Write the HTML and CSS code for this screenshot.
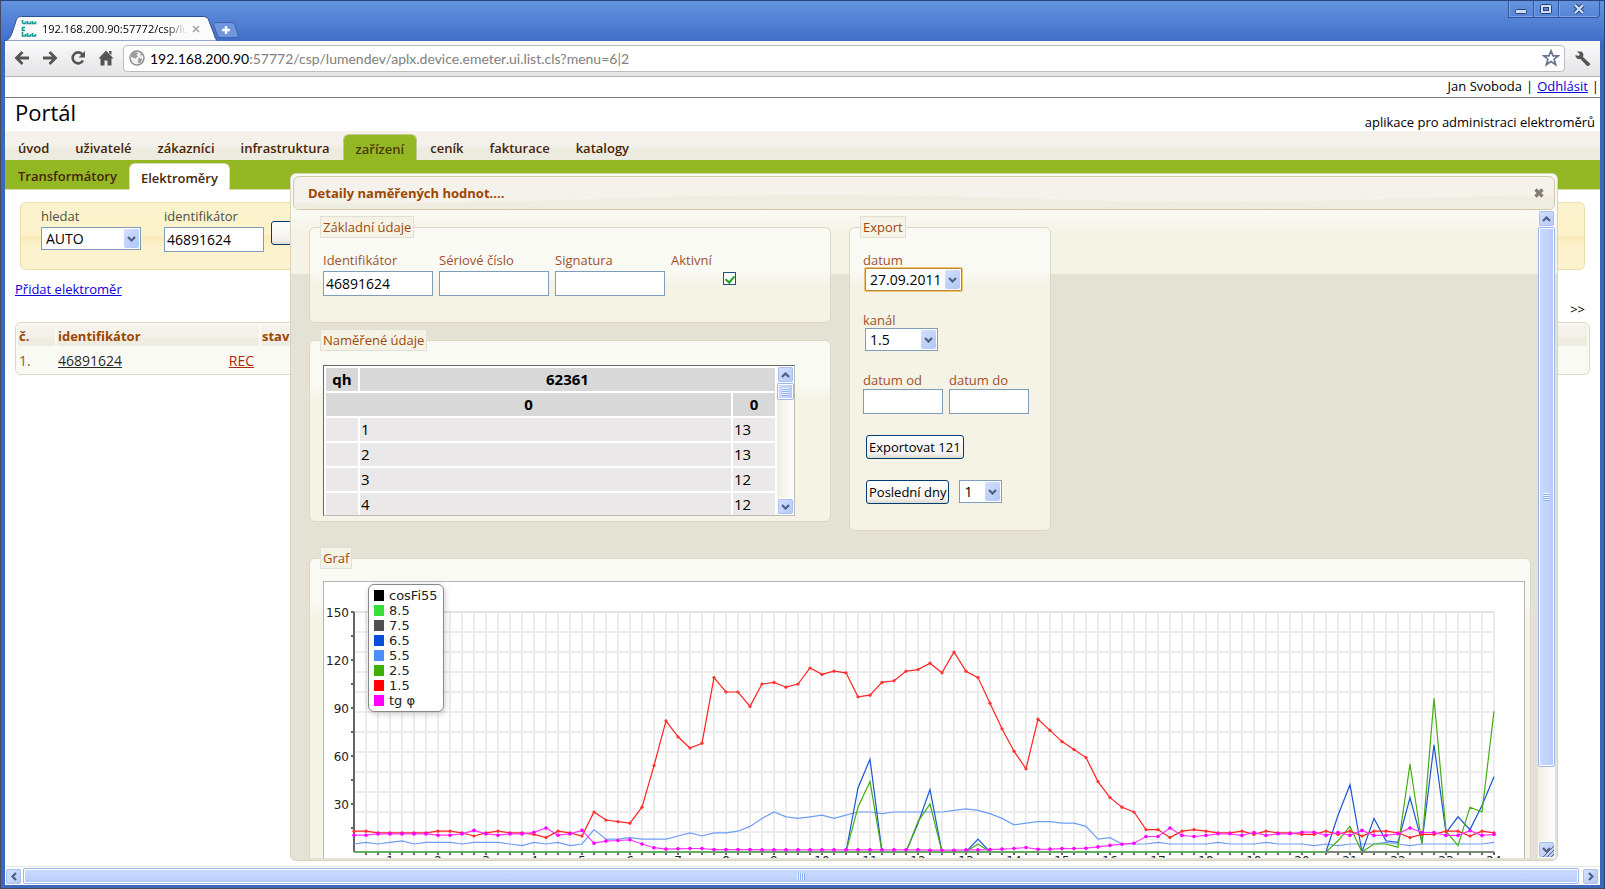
FILE: index.html
```html
<!DOCTYPE html>
<html lang="cs">
<head>
<meta charset="utf-8">
<title>Portál</title>
<link rel="stylesheet" href="styles.css">
</head>
<body>
<svg class="defs" aria-hidden="true">
  <symbol id="down" viewBox="0 0 9 6"><path d="M1 1l3.500 3.500L8 1" fill="none" stroke="#4d6185" stroke-width="2.200"/></symbol>
  <symbol id="up" viewBox="0 0 9 6"><path d="M1 5l3.500-3.500L8 5" fill="none" stroke="#4d6185" stroke-width="2.200"/></symbol>
  <symbol id="left" viewBox="0 0 6 9"><path d="M5 1L1.500 4.500 5 8" fill="none" stroke="#4d6185" stroke-width="2.200"/></symbol>
  <symbol id="right" viewBox="0 0 6 9"><path d="M1 1l3.500 3.500L1 8" fill="none" stroke="#4d6185" stroke-width="2.200"/></symbol>
</svg>
<div class="window">
  <div class="titlebar">
    <div class="tab">
      <svg class="tab-shape" viewBox="0 0 214 25" width="214" height="25"><path d="M0 25C5 24 6 22 8 17L12 5C13 1 15 .5 19 .5H198C203 .5 204 2 205 5L210 18C211 22 212 24 214 25Z" fill="#fbfbfc" stroke="#2c4f94"/></svg>
      <svg class="favicon" viewBox="0 0 16 17" width="16" height="17"><path d="M1.500 0v3.500M1.500 3.500H4.500V1.500M6.500 1v2.500H9.500V1.500M11.500 1v2.500H14.500V1.500M4 7.500H1.500v3H4M1.500 12v4H4.500v-2M6.500 13v3H9.500v-2M11.500 13v3H14.500v-2" fill="none" stroke="#129a93" stroke-width="1.600"/></svg>
      <span class="tab-title">192.168.200.90:57772/csp/lumendev</span>
      <button class="tab-close" aria-label="Zavřít kartu"><svg viewBox="0 0 8 8" width="8" height="8"><path d="M1 1l6 6M7 1L1 7" stroke="#a3a3a3" stroke-width="1.600"/></svg></button>
    </div>
    <button class="newtab" aria-label="Nová karta"><svg viewBox="0 0 26 16" width="26" height="16"><path d="M3 .5H18C21 .5 21.500 2 22 4L25 12C25.500 14.500 25 15.500 22 15.500H8C5 15.500 4.500 14 4 12L1 4C.5 2 .5 .5 3 .5Z" fill="#7095da" stroke="#3e64ad"/><path d="M13 4v8M9 8h8" stroke="#fff" stroke-width="2.400"/></svg></button>
    <div class="winctl">
      <button aria-label="Minimalizovat"><svg viewBox="0 0 14 12" width="14" height="12"><rect x="1.500" y="6.500" width="11" height="4" rx="1" fill="#cfdcf3" stroke="#24447f"/></svg></button>
      <button aria-label="Maximalizovat"><svg viewBox="0 0 14 12" width="14" height="12"><rect x="1.500" y="1.500" width="11" height="9" rx="1" fill="#cfdcf3" stroke="#24447f"/><rect x="4.500" y="4.500" width="5" height="3" fill="#5c87cf" stroke="#24447f"/></svg></button>
      <button class="wide" aria-label="Zavřít"><svg viewBox="0 0 14 12" width="14" height="12"><path d="M3 2l8 8M11 2l-8 8" stroke="#24447f" stroke-width="4.400"/><path d="M3 2l8 8M11 2l-8 8" stroke="#cfdcf3" stroke-width="2.400"/></svg></button>
    </div>
  </div>

  <div class="toolbar">
    <button aria-label="Zpět"><svg viewBox="0 0 16 16" width="16" height="16"><path d="M15 8H3M8.500 2L2.500 8l6 6" fill="none" stroke="#555" stroke-width="2.800"/></svg></button>
    <button aria-label="Vpřed"><svg viewBox="0 0 16 16" width="16" height="16"><path d="M1 8h12M7.500 2l6 6-6 6" fill="none" stroke="#555" stroke-width="2.800"/></svg></button>
    <button aria-label="Obnovit"><svg viewBox="0 0 16 16" width="16" height="16"><path d="M12.500 4.500A5.500 5.500 0 1 0 13 10.500" fill="none" stroke="#555" stroke-width="2.600"/><path d="M15 1v6.500H8.500Z" fill="#555"/></svg></button>
    <button aria-label="Domů"><svg viewBox="0 0 16 16" width="16" height="16"><path d="M8 .5L15.500 8.500H13.500V15.500H9.500V10.500H6.500V15.500H2.500V8.500H.5ZM11 1h2.500v4L11 3Z" fill="#555"/></svg></button>
    <div class="omnibox">
      <svg viewBox="0 0 16 16" width="16" height="16"><circle cx="8" cy="8" r="7" fill="#f1f1f1" stroke="#8d8d8d" stroke-width="1.400"/><path d="M3 3.500C5 1.500 8 2 9 3L7.500 5 9 6.500 6 8.500 3 7 1.800 8ZM9.500 8l4 1-2.500 4.500-2-1Z M11 3l2.500 2-1.500 1Z" fill="#9b9b9b"/></svg>
      <span class="url">192.168.200.90<span>:57772/csp/lumendev/aplx.device.emeter.ui.list.cls?menu=6|2</span></span>
      <svg viewBox="0 0 18 18" width="18" height="18"><path d="M9 1.800l2.100 5h5.100l-4.100 3.400 1.600 5.500L9 12.500l-4.700 3.200 1.600-5.500L1.800 6.800h5.100Z" fill="#fff" stroke="#67758f" stroke-width="1.700"/></svg>
    </div>
    <button aria-label="Nástroje"><svg viewBox="0 0 17 17" width="17" height="17"><path d="M2 1.500h4.500L8.500 4 8 7l7.500 7-1.500 1.800-2 .2L5.500 9H2.500L.5 6.500V5l3 1L5 4.500Z" fill="#555"/></svg></button>
  </div>

  <div class="page">
    <div class="userbar"><span>Jan Svoboda</span><span>|</span><a href="#">Odhlásit</a><span>|</span></div>
    <header class="brand"><h1>Portál</h1><p>aplikace pro administraci elektroměrů</p></header>
    <nav class="nav">
      <a href="#">úvod</a><a href="#">uživatelé</a><a href="#">zákazníci</a><a href="#">infrastruktura</a><a href="#" class="on">zařízení</a><a href="#">ceník</a><a href="#">fakturace</a><a href="#">katalogy</a>
    </nav>
    <nav class="subnav"><a href="#">Transformátory</a><a href="#" class="on">Elektroměry</a></nav>

    <form class="search">
      <div class="field"><label for="h">hledat</label><span class="pick w100"><select id="h"><option>AUTO</option></select><i><svg><use href="#down"/></svg></i></span></div>
      <div class="field"><label for="i">identifikátor</label><input id="i" class="w100" value="46891624"></div>
      <button type="button" class="btn search-btn" aria-label="Hledat"></button>
    </form>
    <div class="links"><a href="#">Přidat elektroměr</a></div>
    <div class="pager"><span>&gt;&gt;</span></div>
    <table class="list">
      <thead><tr><th class="c1">č.</th><th class="c2" colspan="2">identifikátor</th><th>stav</th></tr></thead>
      <tbody><tr><td>1.</td><td><a href="#" class="dark">46891624</a></td><td class="c3"><a href="#" class="rec">REC</a></td><td></td></tr></tbody>
    </table>

    <section class="dialog" role="dialog" aria-labelledby="dt">
      <div class="dlg-head"><svg class="wave" viewBox="0 0 100 10" preserveAspectRatio="none"><path d="M0 7C20 8 30 2 45 3S65 8 80 6S95 3 100 4V10H0Z" fill="#efece1"/></svg><h2 id="dt">Detaily naměřených hodnot....</h2><button aria-label="Zavřít"><svg viewBox="0 0 10 10" width="10" height="10"><path d="M1.500 1.500l7 7M8.500 1.500l-7 7" stroke="#857b6e" stroke-width="3.200"/></svg></button></div>
      <div class="dlg-main">
        <div class="dlg-body">
          <div class="top">
            <div class="col">
              <fieldset class="basic"><legend>Základní údaje</legend>
                <div class="row">
                  <div class="field"><label for="a1">Identifikátor</label><input id="a1" class="w110" value="46891624"></div>
                  <div class="field"><label for="a2">Sériové číslo</label><input id="a2" class="w110"></div>
                  <div class="field"><label for="a3">Signatura</label><input id="a3" class="w110"></div>
                  <div class="field check"><label for="a4">Aktivní</label><input id="a4" type="checkbox" checked></div>
                </div>
              </fieldset>
              <fieldset class="measured"><legend>Naměřené údaje</legend>
                <div class="grid-box">
                  <div class="grid-view">
                    <table class="data">
                      <colgroup><col class="q"><col><col class="v"></colgroup>
                      <tr><th>qh</th><th colspan="2">62361</th></tr>
                      <tr><th colspan="2">0</th><th>0</th></tr>
                      <tr><td></td><td>1</td><td>13</td></tr>
                      <tr><td></td><td>2</td><td>13</td></tr>
                      <tr><td></td><td>3</td><td>12</td></tr>
                      <tr><td></td><td>4</td><td>12</td></tr>
                    </table>
                  </div>
                  <div class="vbar"><button aria-label="Nahoru"><svg><use href="#up"/></svg></button><div class="track"><div class="thumb small"><b></b></div></div><button aria-label="Dolů"><svg><use href="#down"/></svg></button></div>
                </div>
              </fieldset>
            </div>
            <fieldset class="export"><legend>Export</legend>
              <div class="field slot"><label for="e1">datum</label><span class="pick focus w97"><select id="e1"><option>27.09.2011</option></select><i><svg><use href="#down"/></svg></i></span></div>
              <div class="field slot"><label for="e2">kanál</label><span class="pick w73"><select id="e2"><option>1.5</option></select><i><svg><use href="#down"/></svg></i></span></div>
              <div class="row">
                <div class="field"><label for="e3">datum od</label><input id="e3" class="w80"></div>
                <div class="field"><label for="e4">datum do</label><input id="e4" class="w80"></div>
              </div>
              <div class="actions"><button type="button" class="btn">Exportovat 121</button></div>
              <div class="actions"><button type="button" class="btn">Poslední dny</button><span class="pick w43"><select aria-label="Počet dnů"><option>1</option></select><i><svg><use href="#down"/></svg></i></span></div>
            </fieldset>
          </div>
          <fieldset class="graph"><legend>Graf</legend>
            <div class="chart">
              <svg id="plot" viewBox="0 0 1200 300" role="img" aria-label="Graf"></svg>
              <ul class="key" id="key"></ul>
            </div>
          </fieldset>
        </div>
        <div class="vbar main"><button aria-label="Nahoru"><svg><use href="#up"/></svg></button><div class="track"><div class="thumb big"><b></b></div></div><button class="corner" aria-label="Dolů"><svg><use href="#down"/></svg><svg class="grip" viewBox="0 0 12 12"><path d="M1 12L12 1M5 12l7-7M9 12l3-3" stroke="#667" stroke-width="1"/></svg></button></div>
      </div>
    </section>
  </div>
  <div class="hbar"><button aria-label="Vlevo"><svg><use href="#left"/></svg></button><div class="hthumb"><b></b></div><button aria-label="Vpravo"><svg><use href="#right"/></svg></button></div>
</div>
<script src="chart.js"></script>
</body>
</html>
```
FILE: styles.css
```css
*{box-sizing:border-box}
body{margin:0;font:13px/16px "Open Sans","Noto Sans",sans-serif;color:#000}
button{font:inherit;margin:0;padding:0;border:0;background:none;color:inherit;display:flex;align-items:center;justify-content:center}
h1,h2,p,ul{margin:0;padding:0;font-weight:400}
.defs{position:absolute;width:0;height:0}
.window{height:100vh;display:flex;flex-direction:column;padding:0 5px 4px;background:linear-gradient(#6493df 0,#416fc9 40px,#3b68bb 41px);border-top:1px solid #27477f;box-shadow:inset 1px 0 #444b5c,inset -1px 0 #2c4372,inset 0 -1px #444b5c}

.titlebar{height:40px;display:flex;align-items:flex-end;flex:none;margin:0 0 0 -1px}
.tab{position:relative;width:214px;height:25px;display:flex;align-items:center;padding:0 14px 0 17px}
.tab-shape{position:absolute;left:0;top:0}
.favicon,.tab-title,.tab-close{position:relative;flex:none}
.tab-title{width:145px;margin:0 5px;font-size:11px;overflow:hidden;white-space:nowrap;-webkit-mask-image:linear-gradient(90deg,#000 85%,transparent)}
.newtab{margin:0 auto 3px -5px}
.winctl{display:flex;align-self:flex-start}
.winctl button{width:25px;height:17px;border:1px solid #2f559e;border-top:0;border-right:0;box-shadow:inset 1px -1px #7ba1e4}
.winctl .wide{width:42px;border-right:1px solid #2f559e;border-radius:0 0 4px 0}

.toolbar{height:36px;flex:none;display:flex;align-items:center;gap:12px;padding:0 8px 2px 9px;border-top:1px solid #fff;border-bottom:1px solid #b4b4b8;background:linear-gradient(#fafafb,#e4e4e6)}
.omnibox{flex:1;height:27px;margin:0 -2px 0 -3px;padding:0 4px 0 5px;display:flex;align-items:center;gap:5px;background:#fff;border:1px solid #bcbec2;border-radius:4px}
.url{flex:1;font:14px "Lato",sans-serif;white-space:nowrap}
.url span{color:#808080}

.page{position:relative;flex:1;min-height:0;overflow:hidden;background:#fff}
.userbar{height:21px;display:flex;justify-content:flex-end;align-items:center;gap:4px;padding:0 1px 2px 0;border-bottom:1px solid #777}
.userbar a,.links a{color:#1000d8}
.brand{height:33px;display:flex;justify-content:space-between;padding:0 5px 0 10px}
h1{font-size:22px;line-height:28px}
.brand p{line-height:49px;height:33px}
.nav{height:29px;display:flex;background:linear-gradient(#f5f2ec 0,#f3f1e9 50%,#eeece0 60%,#ecebdf);align-items:flex-end}
.nav a,.subnav a{padding:0 13px;font-weight:600;line-height:28px;height:26px;color:#46260a;text-decoration:none}
.nav a.on{background:#94b823;border:1px solid #c3c993;border-bottom:0;border-radius:6px 6px 0 0;padding:0 12px;line-height:28px;color:#4f3a06}
.subnav{height:30px;display:flex;align-items:flex-end;background:#94b823;border-bottom:1px solid #d5d9ae}
.subnav a{height:27px;line-height:29px}
.subnav a.on{background:#fff;border:1px solid #d9dcc0;border-bottom:0;border-radius:6px 6px 0 0;padding:0 11px;line-height:28px;margin:0 0 -1px -1px}

.search{margin:12px 15px 0;height:68px;padding:5px 20px;display:flex;gap:23px;color:#4f4f45;border:1px solid #eadfae;border-radius:6px;background:linear-gradient(#fcf3ce 0,#fcf2cb 48%,#faebb8 51%,#fcf2cc 65%,#fcf2cf)}
.search label{line-height:16px;margin-bottom:3px}
.field{display:flex;flex-direction:column;align-items:flex-start}
label{white-space:nowrap}
input,select{font:14px "Open Sans","Noto Sans",sans-serif;color:#000;margin:0}
input:not([type=checkbox]){height:25px;padding:0 2px;border:1px solid #7f9db9;background:#fff}
.pick{position:relative;display:inline-flex;height:23px;border:1px solid #7f9db9;background:#fff}
.pick select{appearance:none;width:100%;border:0;background:none;padding:0 0 1px 4px;outline:0}
.pick i{position:absolute;right:1px;top:1px;bottom:1px;width:15px;display:flex;align-items:center;justify-content:center;border-radius:2px;background:linear-gradient(135deg,#d3e0ff,#b0c6f6);pointer-events:none}
.pick svg,.vbar svg{width:9px;height:6px}
.pick.focus{border-color:#b98a35;box-shadow:0 0 0 1px #f0c36c;border-radius:1px}
.w100{width:100px}.w110{width:110px}.w97{width:97px}.w73{width:73px}.w43{width:43px}.w80{width:80px}
.btn{height:24px;padding:0 2px;border:1px solid #003c74;border-radius:3px;background:linear-gradient(#fff,#f3f2ee 80%,#dcd9cf);white-space:nowrap;color:#000;width:max-content}
.search-btn{width:80px;margin:13px 0 0 -16px}
.links{margin:11px 10px 0}
.pager{margin:4px 15px 5px;text-align:right}
.list{width:calc(100% - 20px);margin:0 10px;border:1px solid #ddd8c4;border-radius:6px;border-spacing:2px;border-collapse:separate;table-layout:fixed;background:#f9faf4;color:#a0522d}
.list th{height:21px;padding:0 1px;text-align:left;font-weight:700;color:#9c4703;background:linear-gradient(#f5f2ec 55%,#efede2 60%)}
.list td{height:24px;padding:2px 1px 0;font-size:14px}
.c1{width:37px}.c2{width:202px}
.list .c3{text-align:right;padding-right:5px}
.dark{color:#2b2b2b}.rec{color:#b02a0c}

.dialog{position:absolute;left:285px;right:42px;top:96px;bottom:5px;display:flex;flex-direction:column;padding:2px;border:1px solid #d9d3bd;border-radius:6px;background:linear-gradient(#fafaf5 0,#fafaf5 38px,#f5f3e5 60px,#f5f3e5 100px,#e4e2d5 100px)}
.dlg-head{position:relative;flex:none;height:34px;display:flex;align-items:center;justify-content:space-between;padding:0 10px 0 14px;border:1px solid #d3c9a9;border-radius:6px;background:#f5f2ec;overflow:hidden}
.wave{position:absolute;left:0;bottom:0;width:100%;height:20px}
h2{position:relative;font-size:13px;font-weight:700;color:#9c4703}
.dlg-head button{position:relative}
.dlg-main{flex:1;min-height:0;display:flex}
.dlg-body{flex:1;min-width:0;overflow:hidden;padding:6px 7px 0 16px}
.top{display:flex;gap:18px;align-items:flex-start}
.col{flex:0 0 522px;display:flex;flex-direction:column;gap:6px}
fieldset{min-width:0;margin:0;padding:14px 5px 26px 13px;border:1px solid #ddd8c4;border-radius:6px;background:linear-gradient(#f9faf4 0,#f9faf4 44px,#f5f3e5 58px);color:#a0522d}
legend{margin-left:-3px;padding:0 2px;height:22px;line-height:20px;border:1px solid #e0dfd8;background:#f5f3e5;color:#a0480c}
.row{display:flex;gap:6px}
.basic label{margin-bottom:3px}
.export{width:202px}
.export .row label{margin-bottom:1px}
.export .pick{margin-left:2px}
.slot{height:60px}
.actions{display:flex;gap:10px;margin:21px 0 0 3px}
.export .actions .pick{margin-left:0}
input[type=checkbox]{appearance:none;width:13px;height:13px;margin:1px 0 0 52px;border:1px solid #1c5180;background:#fff}
input[type=checkbox]:checked::after{content:"";display:block;width:4px;height:7px;margin:1px auto 0;border:solid #21a121;border-width:0 2px 2px 0;transform:rotate(40deg)}
.measured{padding-top:14px;padding-bottom:5px}
.grid-box{width:472px;height:151px;display:flex;border:1px solid #bbb;border-top-color:#666;border-left-color:#666;background:#fff;overflow:hidden}
.grid-view{flex:1;overflow:hidden}
.data{width:100%;border-spacing:2px;font-size:15px;line-height:21px;color:#000;table-layout:fixed}
.data th{padding:1px;background:#d8d8d8}
.data td{padding:1px 1px;background:#eae8e8}
.q{width:32px}.v{width:42px}

.vbar{width:17px;flex:none;display:flex;flex-direction:column;background:linear-gradient(90deg,#f0efe6,#fefefb)}
.vbar button,.hbar button{flex:none;width:17px;height:17px;border:1px solid #fff;outline:1px solid #a9c0ee;outline-offset:-2px;border-radius:3px;background:linear-gradient(135deg,#d6e2ff,#b2c8f7)}
.track{flex:1}
.thumb{display:flex;align-items:center;justify-content:center;border:1px solid #9db6ea;outline:1px solid #fff;outline-offset:-2px;border-radius:2px;background:linear-gradient(90deg,#cad9ff,#c2d3fd 60%,#b3c9f8)}
.thumb b{width:7px;height:8px;background:repeating-linear-gradient(#eef4fe 0 1px,#8cb0f8 1px 2px)}
.small{height:17px}.big{height:88%}
.corner{position:relative}
.vbar .grip{position:absolute;right:0;bottom:0;width:12px;height:12px}
.hbar{height:19px;flex:none;display:flex;padding:1px 1px 1px 0;background:#fdfdfb;border-top:1px solid #e8e7e0}
.hbar button svg{width:6px;height:9px}
.hthumb{flex:1;margin:0 3px 0 1px;display:flex;align-items:center;justify-content:center;border:1px solid #9db6ea;outline:1px solid #fff;outline-offset:-2px;border-radius:2px;background:linear-gradient(#cad9ff,#c2d3fd 60%,#b3c9f8)}
.hthumb b{width:8px;height:7px;background:repeating-linear-gradient(90deg,#eef4fe 0 1px,#8cb0f8 1px 2px)}

.graph{margin-top:16px;padding-top:12px}
.chart{position:relative;border:1px solid #b5b5b5;background:#fff}
.chart>svg{display:block;width:100%;height:auto}
.chart text{font:12px "DejaVu Sans",sans-serif;fill:#222}
.key{position:absolute;left:44px;top:2px;padding:3px 5px;list-style:none;border:1px solid #888;border-radius:6px;background:#fff;box-shadow:1px 2px 6px #0003;font:13px/15px "DejaVu Sans",sans-serif;color:#222}
.key li{display:flex;align-items:center;gap:5px}
.key i{width:10px;height:11px}
```
FILE: chart.js
```js
const left = 30, base = 270, step = 12, unit = 1.6;
const zeros = set => Array.from({ length: 96 }, (_, i) => set[i] || 0);

const s15 = [13,13,12,12,12,12,12,13,13,12,10,12,13,12,12,11,9,13,12,10,25,20,19,18,28,54,82,72,65,68,109,100,100,91,105,106,103,105,115,111,113,112,97,98,106,107,113,114,118,112,125,113,109,93,77,63,52,83,76,69,64,59,44,34,28,25,14,14,9,13,14,13,12,12,13,11,13,12,12,11,11,13,11,13,10,13,13,12,9,11,11,13,13,10,13,12];
const tg = [10.5,10.5,11.3,11.3,11.3,11.3,11.3,10.5,10.5,11.3,13.5,11.3,10.5,11.3,11.3,12.3,15,10.5,11.3,13.5,5.5,6.8,7.2,7.6,5,2.7,1.8,2,2.2,2.2,1.5,1.5,1.5,1.5,1.3,1.3,1.3,1.3,1.3,1.3,1.3,1.3,1.4,1.4,1.3,1.3,1.3,1.3,1.1,1.1,1.1,1.3,1.3,1.5,1.8,2.2,2.8,1.7,1.8,2.1,2.2,2.4,3.2,4.1,4.9,5.5,9.7,9.7,15,10.4,9.7,10.4,11.4,11.4,10.4,12.2,10.4,11.4,11.4,12.4,12.4,10.4,12.2,10.4,13.5,10.4,10.4,11.4,15,12.2,12.2,10.4,10.4,13.3,10.4,11];
const s55 = [5,6,5,6,7,5,6,6,6,5,6,6,6,5,4,6,5,6,4,5,14,8,8,9,8,8,8,10,12,10,12,12,13,16,21,25,22,21,22,23,21,23,25,25,24,25,25,25,25,25,26,27,26,24,21,17,18,19,19,18,18,16,8,9,5,5,5,6,5,5,5,5,6,5,5,5,6,5,5,5,4,5,4,5,5,5,6,5,4,5,5,5,5,5,5,6];
const s65 = zeros({42:40,43:58,47:18,48:39,52:8,82:23,83:42,85:21,86:7,87:6,88:34,89:6,90:67,91:12,92:22,93:14,94:29,95:47});
const s25 = zeros({42:28,43:44,47:19,48:30,52:5,82:7,83:16,85:5,86:5,87:3,88:55,89:5,90:96,91:13,92:4,93:28,94:25,95:88});

const x = i => left + i * step, y = v => base - v * unit;
const line = (x1, y1, x2, y2, c, w) => `<path d="M${x1} ${y1}L${x2} ${y2}" stroke="${c}" stroke-width="${w}"/>`;
const curve = (d, c) => `<polyline points="${d.map((v, i) => x(i) + ',' + y(v).toFixed(1)).join(' ')}" fill="none" stroke="${c}" stroke-width="1.2"/>`;
const dots = (d, c, r) => d.map((v, i) => `<circle cx="${x(i)}" cy="${y(v).toFixed(1)}" r="${r}" fill="${c}"/>`).join('');

let out = '';
for (let i = 1; i < 96; i++) out += line(x(i), 30, x(i), base, '#ededed', 2);
for (let k = 0; k < 12; k++) out += line(left, 30 + k * 20, x(95), 30 + k * 20, '#ededed', 2);
out += line(left, 30, x(95), 30, '#e2e2e2', 2) + line(left, 30, left, base, '#666', 2);
for (let v = 15; v <= 150; v += 15) {
  out += line(left - 3, y(v), left, y(v), '#666', 2);
  if (v % 30 === 0) out += `<text x="${left - 5}" y="${y(v) + 5}" text-anchor="end">${v}</text>`;
}
for (let i = 1; i < 96; i++) out += line(x(i), base, x(i), base + 3, '#666', 2);
for (let h = 1; h <= 24; h++) out += `<text x="${x(4 * h - 1)}" y="${base + 13}" text-anchor="middle">${h}</text>`;
out += curve(s55, '#6f9df5') + curve(s65, '#1a56d6') + curve(s25, '#45ad12');
out += line(left, base, x(95), base, '#7b8a78', 2) + line(left, base, x(81), base, '#65ad62', 2);
out += curve(s15, '#f22') + dots(s15, '#f33', 1.6) + curve(tg, '#f3f') + dots(tg, '#f0f', 1.8);
document.getElementById('plot').innerHTML = out;

document.getElementById('key').innerHTML = [
  ['cosFi55', '#000'], ['8.5', '#3bdf3b'], ['7.5', '#504e50'], ['6.5', '#0a4fdc'],
  ['5.5', '#4f8cff'], ['2.5', '#3fae05'], ['1.5', '#f00'], ['tg φ', '#f0f']
].map(([t, c]) => `<li><i style="background:${c}"></i>${t}</li>`).join('');
```
